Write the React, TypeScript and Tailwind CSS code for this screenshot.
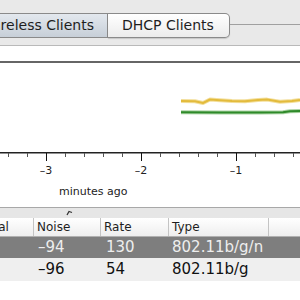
import React from "react";

const font = { fontFamily: '"DejaVu Sans", "Liberation Sans", sans-serif' };

const yellow = [
  [181, 101], [195, 101.2], [203, 103], [210, 99.5], [220, 100.2], [232, 101],
  [245, 101.3], [258, 100], [267, 99.6], [280, 101.8], [292, 101], [300, 100],
];
const green = [
  [181, 112.3], [220, 112.5], [260, 112.4], [283, 112.3], [290, 111.2], [300, 111],
];

function toPath(pts: number[][]) {
  return pts.map((p, i) => `${i === 0 ? "M" : "L"}${p[0]} ${p[1] - 63}`).join(" ");
}

function Chart() {
  const majors = [46.5, 141.5, 236.5];
  const minors: number[] = [];
  for (let x = 8.5; x < 300; x += 19) {
    if (!majors.some((m) => Math.abs(m - x) < 2)) minors.push(x);
  }
  return (
    <svg width="300" height="144" className="block" style={font}>
      <path d={toPath(yellow)} fill="none" stroke="#f3df9c" strokeWidth="4" strokeLinejoin="round" />
      <path d={toPath(yellow)} fill="none" stroke="#e3bb3c" strokeWidth="2" strokeLinejoin="round" />
      <path d={toPath(green)} fill="none" stroke="#a9d3a2" strokeWidth="4" strokeLinejoin="round" />
      <path d={toPath(green)} fill="none" stroke="#2f8a2a" strokeWidth="2" strokeLinejoin="round" />
      <rect x="0" y="89" width="300" height="1.5" fill="#222" />
      {minors.map((x) => (
        <line key={x} x1={x} x2={x} y1="90" y2="94" stroke="#555" strokeWidth="1" />
      ))}
      {majors.map((x) => (
        <line key={x} x1={x} x2={x} y1="90" y2="98" stroke="#111" strokeWidth="1" />
      ))}
      <text x="46" y="111" textAnchor="middle" fontSize="11" fill="#222">–3</text>
      <text x="141" y="111" textAnchor="middle" fontSize="11" fill="#222">–2</text>
      <text x="236" y="111" textAnchor="middle" fontSize="11" fill="#222">–1</text>
      <text x="59" y="132" fontSize="11" fill="#222">minutes ago</text>
    </svg>
  );
}

export default function App() {
  return (
    <div className="w-[300px] h-[300px] overflow-hidden bg-white flex flex-col" style={font}>
      <div className="h-[46px] bg-[#e9e9e9] border-b border-[#b9b9b9] pt-[13px] flex">
        <div className="ml-[-30px] w-[138px] h-[25px] flex items-center justify-end pr-[13px] border border-[#8a8a8a] bg-gradient-to-b from-[#e3e8ee] to-[#c7cfd8] text-[14px] text-[#1e1e1e] whitespace-nowrap">
          Wireless Clients
        </div>
        <div className="w-[122px] h-[25px] flex items-center pl-[14px] border border-l-0 border-[#8a8a8a] rounded-r-[5px] bg-gradient-to-b from-white to-[#ececec] text-[14px] text-[#1e1e1e] whitespace-nowrap shadow-[0_1px_1px_rgba(0,0,0,0.15)]">
          DHCP Clients
        </div>
        <div className="flex-1 h-px bg-[#a0a0a0] mt-[11px]" />
      </div>
      <div className="h-[15px]" />
      <div className="border-t-2 border-[#666]">
        <Chart />
      </div>
      <div className="h-[11px] border-t border-[#a8a8a8] bg-[#e6e6e6] relative">
        <svg width="8" height="6" className="absolute left-[66px] top-[2px]">
          <path d="M1 5 L3 1.5 L6 2.5" fill="none" stroke="#333" strokeWidth="1.3" />
        </svg>
      </div>
      <div className="h-[19px] flex border-b border-[#b0b0b0] bg-gradient-to-b from-white to-[#eeeeee] text-[12px] text-[#1e1e1e]">
        <div className="w-[34px] border-r border-[#c4c4c4] overflow-hidden flex items-center">
          <span className="ml-[-28px] whitespace-nowrap">Signal</span>
        </div>
        <div className="w-[67px] border-r border-[#c4c4c4] pl-[3px] flex items-center">Noise</div>
        <div className="w-[68px] border-r border-[#c4c4c4] pl-[3px] flex items-center">Rate</div>
        <div className="w-[100px] border-r border-[#c4c4c4] pl-[3px] flex items-center">Type</div>
        <div className="flex-1" />
      </div>
      <div className="h-[21px] flex items-center bg-[#7e7e7e] text-[15px] text-[#eeeeee]">
        <div className="w-[34px]" />
        <div className="w-[67px] pl-[4px]">–94</div>
        <div className="w-[68px] pl-[5px]">130</div>
        <div className="w-[100px] pl-[3px]">802.11b/g/n</div>
      </div>
      <div className="h-[23px] flex items-center bg-[#efefef] text-[15px] text-[#111]">
        <div className="w-[34px]" />
        <div className="w-[67px] pl-[4px]">–96</div>
        <div className="w-[68px] pl-[5px]">54</div>
        <div className="w-[100px] pl-[3px]">802.11b/g</div>
      </div>
    </div>
  );
}
